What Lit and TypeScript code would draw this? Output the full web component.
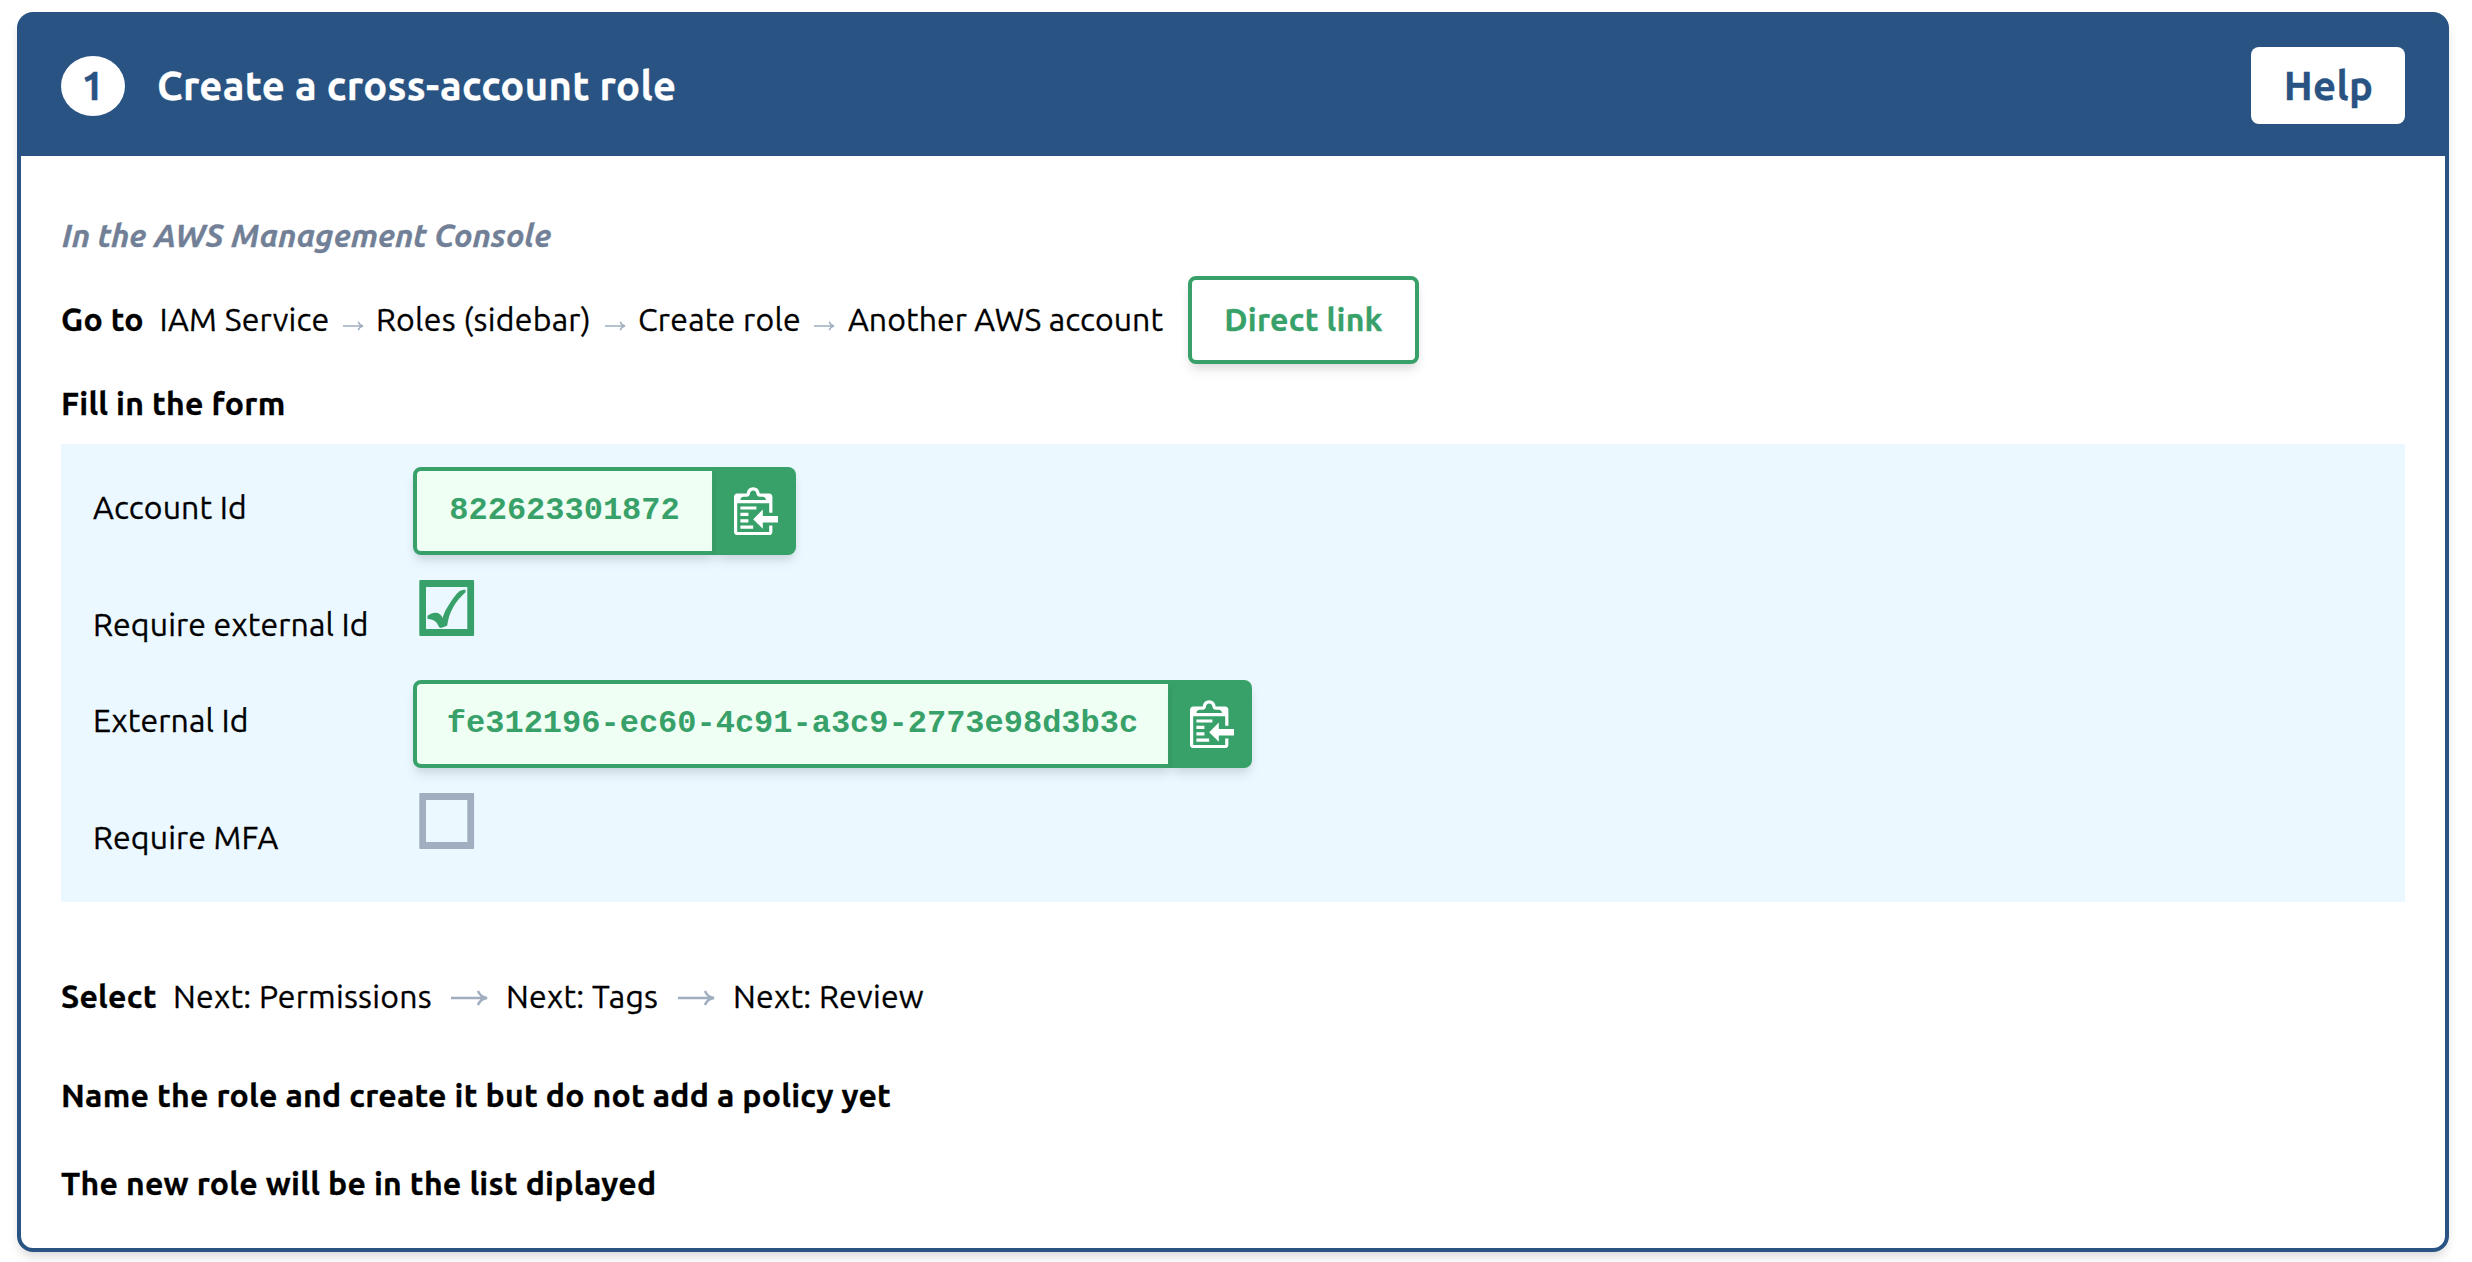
import { LitElement, html, css, svg } from "lit";
import { customElement, property } from "lit/decorators.js";

const fonts = css`Ubuntu, "Noto Sans", sans-serif`;

const shortArrow = svg`<svg class="arrow" width="21" height="10" viewBox="0 0 21 10" fill="none" stroke="#a0aec0" stroke-width="1.4"><path d="M0 5H19.5M15.2 .8C16 3 17.6 4.4 20 5C17.6 5.6 16 7 15.2 9.2"/></svg>`;
const longArrow = svg`<svg class="arrow long" width="37" height="16" viewBox="0 0 37 16" fill="none" stroke="#a0aec0" stroke-width="2.4"><path d="M0 8H35M27 1C28.4 4.8 31.4 7.2 36 8C31.4 8.8 28.4 11.2 27 15"/></svg>`;

@customElement("copy-field")
export class CopyField extends LitElement {
  @property() value = "";
  @property({ type: Boolean, reflect: true }) wide = false;

  static styles = css`
    :host { display: flex; height: 88px; letter-spacing: 0; -webkit-text-stroke: 0; }
    .value {
      box-sizing: border-box;
      width: 303px;
      height: 88px;
      border: 4px solid #38a169;
      border-radius: 8px 0 0 8px;
      background: #f0fff4;
      color: #38a169;
      font: bold 32px/80px "Liberation Mono", monospace;
      text-align: center;
      white-space: nowrap;
      box-shadow: 0 8px 12px -2px rgba(0, 0, 0, 0.1), 0 4px 8px -2px rgba(0, 0, 0, 0.06);
    }
    :host([wide]) .value { width: 759px; }
    .copy {
      display: flex;
      align-items: center;
      justify-content: center;
      box-sizing: border-box;
      width: 80px;
      height: 88px;
      padding: 0 0 3px;
      border: 0;
      border-radius: 0 8px 8px 0;
      background: #38a169;
      color: #fff;
      box-shadow: 0 8px 12px -2px rgba(0, 0, 0, 0.1), 0 4px 8px -2px rgba(0, 0, 0, 0.06);
    }
  `;

  render() {
    return html`
      <div class="value">${this.value}</div>
      <button class="copy" aria-label="Copy">
        <svg width="44.8" height="51.2" viewBox="0 0 14 16" fill="currentColor">
          <path fill-rule="evenodd" d="M2 13h4v1H2v-1zm5-6H2v1h5V7zm2 3V8l-3 3 3 3v-2h5v-2H9zM4.5 9H2v1h2.5V9zM2 12h2.5v-1H2v1zm9 1h1v2c-.02.28-.11.52-.3.7-.19.18-.42.28-.7.3H1c-.55 0-1-.45-1-1V4c0-.55.45-1 1-1h3c0-1.11.89-2 2-2 1.11 0 2 .89 2 2h3c.55 0 1 .45 1 1v5h-1V6H1v9h10v-2zM2 5h8c0-.55-.45-1-1-1H8c-.55 0-1-.45-1-1s-.45-1-1-1-1 .45-1 1-.45 1-1 1H3c-.55 0-1 .45-1 1z"/>
        </svg>
      </button>
    `;
  }
}

@customElement("check-mark-box")
export class CheckMarkBox extends LitElement {
  @property({ type: Boolean, reflect: true }) checked = false;

  static styles = css`
    :host { display: block; margin-left: 6px; height: 56px; color: #a0aec0; }
    :host([checked]) { color: #38a169; }
    svg { display: block; }
  `;

  render() {
    return html`
      <svg width="56" height="56" viewBox="0 0 56 56" fill="currentColor">
        <path fill-rule="evenodd" d="M1.3 0H54.1Q55.1 0 55.1 1V55Q55.1 56 54.1 56H1.3Q.3 56 .3 55V1Q.3 0 1.3 0ZM7 7V49H48.3V7Z"/>
        ${this.checked
          ? svg`<path d="M8.5 35.7C12 33.6 14.5 32.4 17 32.8C20.5 33.2 22.6 35.2 23.5 38C25 33 27.600 28 31.500 22.300C35 17 38.500 12.500 40.800 11C42.800 10 44.500 9.700 46.500 9.700V12.300C41.500 17 37.500 21.500 34.200 27.300C30.800 33.300 29.200 38.500 28.200 45.500C26.500 46.500 24.200 47.300 21.300 48C20.300 47.700 19.700 46.500 19 45C17.300 41.500 14 39 8.500 39Z"/>`
          : null}
      </svg>
    `;
  }
}

@customElement("app-root")
export class AppRoot extends LitElement {
  static styles = css`
    :host {
      display: block;
      box-sizing: border-box;
      height: 1262px;
      padding: 12px 23px 10px 17px;
      overflow: hidden;
      background: #fff;
      color: #000;
      font: 32px/48px ${fonts};
      letter-spacing: 0.25px;
      white-space: nowrap;
      -webkit-text-stroke: 0.3px;
    }
    .card {
      box-sizing: border-box;
      height: 1240px;
      border: 4px solid #285382;
      border-radius: 16px;
      box-shadow: 0 8px 12px -2px rgba(0, 0, 0, 0.1), 0 4px 8px -2px rgba(0, 0, 0, 0.06);
    }
    .header {
      display: flex;
      align-items: flex-start;
      box-sizing: border-box;
      height: 140px;
      padding: 31px 40px 0;
      border-radius: 11px 11px 0 0;
      background: #285382;
      box-shadow: 0 0 0 1px #285382;
      clip-path: inset(-1px -1px 0);
      color: #fff;
      font-size: 40px;
      font-weight: 700;
      letter-spacing: 0.33px;
    }
    .number {
      width: 64px;
      height: 60px;
      margin-top: 9px;
      border-radius: 50%;
      background: #fff;
      color: #285382;
      line-height: 60px;
      text-align: center;
    }
    .title { flex: 1; margin: 9px 0 0 32px; line-height: 60px; font-size: 40px; }
    .help {
      width: 154px;
      height: 77px;
      padding: 0 0 0 1px;
      border: 0;
      border-radius: 8px;
      background: #fff;
      color: #285382;
      font: bold 40px/77px ${fonts};
      letter-spacing: 0.36px;
    }
    .body { padding: 55px 40px 0; }
    h1, h2, p { margin: 0; font-size: 32px; }
    .context { padding-left: 1px; color: #718096; font-style: italic; font-weight: 700; letter-spacing: 0; }
    .path {
      display: grid;
      grid-template-columns: 98.5px 183.5px 33px 229px 33px 176px 34px 340px 231px;
      align-items: center;
      height: 88px;
      margin-top: 17px;
    }
    .path > span, .path > b { padding-bottom: 2px; }
    .path > .last { letter-spacing: 0.07px; }
    .arrow { display: block; margin-top: 11px; }
    .arrow.long { margin-top: 4px; }
    .link {
      box-sizing: border-box;
      height: 88px;
      padding: 0 0 2px;
      border: 4px solid #38a169;
      border-radius: 8px;
      background: #fff;
      color: #38a169;
      font: bold 32px/78px ${fonts};
      letter-spacing: 0.25px;
      box-shadow: 0 8px 12px -2px rgba(0, 0, 0, 0.1), 0 4px 8px -2px rgba(0, 0, 0, 0.06);
    }
    .fill { margin-top: 15px; font-weight: 700; }
    .form {
      display: grid;
      grid-template-columns: 320px 1fr;
      grid-template-rows: 113px 100px 113px 86px;
      align-items: start;
      box-sizing: border-box;
      height: 458px;
      margin-top: 17px;
      padding: 23px 32px 0;
      background: #ebf8ff;
    }
    .label { line-height: 80px; letter-spacing: 0.15px; }
    .label.low { line-height: 88px; }
    .next {
      display: grid;
      grid-template-columns: 112px 278px 55px 171.5px 55.5px auto;
      justify-content: start;
      align-items: center;
      height: 48px;
      margin-top: 70px;
    }
    .name { margin-top: 51px; font-weight: 700; letter-spacing: 0.23px; }
    .result { margin-top: 40px; font-weight: 700; }
  `;

  render() {
    return html`
      <section class="card">
        <header class="header">
          <div class="number">1</div>
          <h1 class="title">Create a cross-account role</h1>
          <button class="help">Help</button>
        </header>
        <div class="body">
          <p class="context">In the AWS Management Console</p>
          <div class="path">
            <b>Go to</b>
            <span>IAM Service</span>${shortArrow}
            <span>Roles (sidebar)</span>${shortArrow}
            <span>Create role</span>${shortArrow}
            <span class="last">Another AWS account</span>
            <button class="link">Direct link</button>
          </div>
          <p class="fill">Fill in the form</p>
          <div class="form">
            <div class="label">Account Id</div>
            <copy-field value="822623301872"></copy-field>
            <div class="label low">Require external Id</div>
            <check-mark-box checked></check-mark-box>
            <div class="label">External Id</div>
            <copy-field wide value="fe312196-ec60-4c91-a3c9-2773e98d3b3c"></copy-field>
            <div class="label low">Require MFA</div>
            <check-mark-box></check-mark-box>
          </div>
          <div class="next">
            <b>Select</b>
            <span>Next: Permissions</span>${longArrow}
            <span>Next: Tags</span>${longArrow}
            <span>Next: Review</span>
          </div>
          <p class="name">Name the role and create it but do not add a policy yet</p>
          <p class="result">The new role will be in the list diplayed</p>
        </div>
      </section>
    `;
  }
}
